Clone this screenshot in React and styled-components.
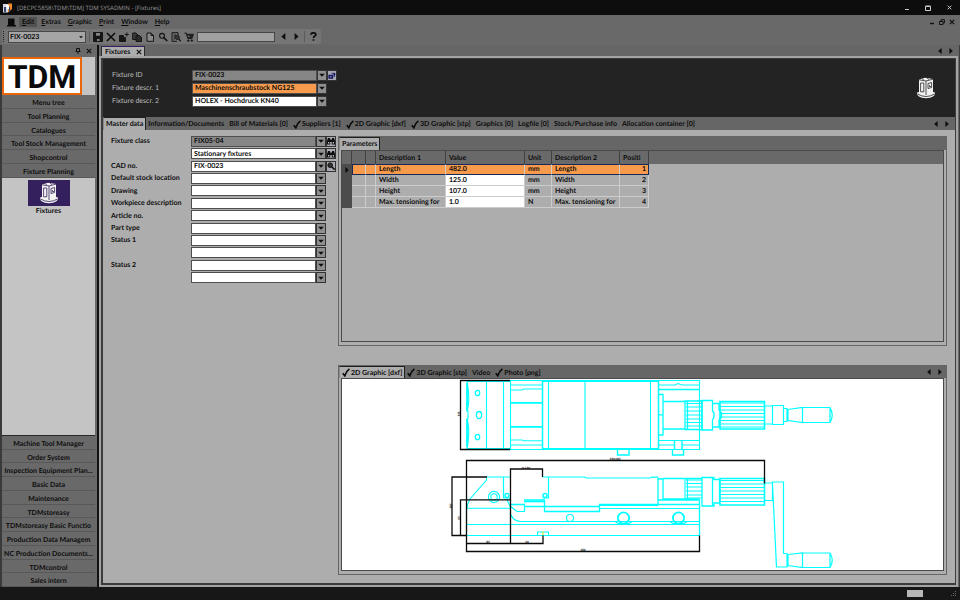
import { useState } from 'react';
import styled, { createGlobalStyle, css } from 'styled-components';

const GlobalStyle = createGlobalStyle`
  * {
    box-sizing: border-box;
  }

  body {
    margin: 0;
    background: #171717;
    color: #0c0c0c;
    font-family: Lato, 'Open Sans', sans-serif;
    font-size: 7px;
    font-weight: 700;
    line-height: 10px;
    text-rendering: geometricPrecision;
  }

  button,
  input,
  select {
    font: inherit;
    color: inherit;
    margin: 0;
    padding: 0;
    border: 0;
    border-radius: 0;
    background: none;
    text-rendering: inherit;
  }

  svg {
    display: block;
  }
`;

// Window frame
const Window = styled.div`
  min-height: 100vh;
  display: flex;
  flex-direction: column;
  background: #696969;
`;

const TitleBar = styled.header`
  display: flex;
  align-items: center;
  height: 15px;
  padding: 0 7px 0 3px;
  gap: 5px;
  background: #0d0d0d;
  color: #9a9a9a;
  font-family: 'Open Sans', 'Noto Sans', sans-serif;
  font-size: 6px;
  font-weight: 400;
`;

const WindowButtons = styled.div`
  display: flex;
  align-items: center;
  gap: ${(p) => (p.$tight ? '2px' : '13px')};
  margin-left: auto;
`;

const IconButton = styled.button`
  display: flex;
  align-items: center;
  justify-content: center;
  width: ${(p) => p.$size || 8}px;
  height: ${(p) => p.$size || 8}px;
  flex: none;
`;

const MenuBar = styled.nav`
  display: flex;
  align-items: center;
  height: 14px;
  padding: 0 4px 0 6px;
  gap: 1px;
`;

const MenuButton = styled.button`
  height: 10px;
  padding: 0 3px;
  background: ${(p) => (p.$active ? '#525252' : 'none')};

  &::first-letter {
    text-decoration: underline;
  }
`;

const ToolRow = styled.div`
  display: flex;
  height: 16px;
  padding: 0 2px 1px;
`;

const ToolBar = styled.div`
  display: flex;
  align-items: center;
  gap: 3px;
  padding: 0 3px 0 1px;
  border-radius: 2px;
  background: #757575;
`;

const Grip = styled.span`
  width: 2px;
  height: 11px;
  border-left: 1px dotted #1c1c1c;
`;

const ComboBox = styled.div`
  display: flex;
  align-items: center;
  width: 78px;
  height: 12px;
  padding-right: 2px;
  border: 1px solid #474747;
  background: #a5a5a5;
`;

const ComboSelect = styled.select`
  appearance: none;
  flex: 1;
  min-width: 0;
  height: 10px;
  padding-left: 1px;
  outline: none;
`;

const Separator = styled.span`
  width: 1px;
  height: 11px;
  background: #5c5c5c;
`;

const ToolSearch = styled.input`
  width: 78px;
  height: 10px;
  border: 1px solid #474747;
  background: #a0a0a0;
`;

// Sidebar
const Main = styled.div`
  flex: 1;
  display: flex;
  min-height: 0;
`;

const Sidebar = styled.aside`
  display: flex;
  flex-direction: column;
  width: 99px;
  flex: none;
  padding: 0 2px 0 0;
  border-left: 2px solid #3a3a3a;
  border-right: 2px solid #121212;
`;

const SidebarHead = styled.div`
  display: flex;
  justify-content: flex-end;
  align-items: center;
  gap: 3px;
  height: 12px;
  padding-right: 2px;
`;

const LogoStrip = styled.div`
  display: flex;
  height: 38px;
  background: #c4c4c4;
`;

const Logo = styled.div`
  display: flex;
  align-items: center;
  justify-content: center;
  width: 80px;
  padding-top: 2px;
  border: 2px solid #e8670c;
  background: #ffffff;
  color: #0b0b0b;
  font-family: Roboto, 'Liberation Sans', sans-serif;
  font-size: 32px;
  font-weight: 700;
  line-height: 32px;
`;

const NavGroup = styled.nav`
  display: flex;
  flex-direction: column;
  height: ${(p) => p.$height}px;
`;

const NavButton = styled.button`
  flex: 1;
  min-height: 0;
  padding-top: 3px;
  border-bottom: 1px solid #585858;
  background: #696969;
  white-space: nowrap;
`;

const NavContent = styled.div`
  flex: 1;
  display: flex;
  flex-direction: column;
  align-items: center;
  padding-top: 2px;
  border-bottom: 1px solid #2a2a2a;
  background: #c4c4c4;
`;

const ModuleButton = styled.button`
  display: flex;
  flex-direction: column;
  align-items: center;
`;

const ModuleTile = styled.span`
  display: flex;
  align-items: center;
  justify-content: center;
  width: 42px;
  height: 26px;
  background: #33205c;
`;

// Document area
const Workspace = styled.main`
  flex: 1;
  display: flex;
  flex-direction: column;
  min-width: 0;
  border-right: 1px solid #3a3a3a;
`;

const TabStrip = styled.div`
  display: flex;
  align-items: stretch;
  height: ${(p) => p.$height}px;
  padding-right: ${(p) => p.$end || 0}px;
  background: #666666;
`;

const TabButton = styled.button`
  display: flex;
  align-items: center;
  gap: 1px;
  padding: 0 2px;
  border-right: 1px solid transparent;
  white-space: nowrap;
  ${(p) =>
    p.$active
      ? css`
          border-top: 1px solid #1f1f1f;
          border-left: 1px solid #8a8a8a;
          border-right: 1px solid #1f1f1f;
          background: #adadad;
        `
      : css`
          border-top: 1px solid transparent;
        `}
`;

const DocTab = styled.div`
  display: flex;
  align-items: center;
  gap: 6px;
  margin: 1px 0 0 2px;
  padding: 0 2px 0 3px;
  border: 1px solid #2b2b2b;
  border-top-color: #33205c;
  border-bottom: 0;
  background: #adadad;
`;

const TabArrows = styled.div`
  display: flex;
  align-items: center;
  gap: 3px;
  margin-left: auto;
`;

const Document = styled.section`
  flex: 1;
  display: flex;
  flex-direction: column;
  margin-right: 1px;
  border: 2px solid #a3a3a3;
`;

const DocumentInner = styled.div`
  flex: 1;
  display: flex;
  flex-direction: column;
  border: 2px solid #3c3c3c;
  border-width: 1px 1px 2px 2px;
  background: #adadad;
`;

const RecordHead = styled.div`
  display: flex;
  justify-content: space-between;
  align-items: center;
  height: 58px;
  padding: 0 19px 0 9px;
  background: #232323;
`;

const HeadFields = styled.div`
  display: grid;
  grid-template-columns: 80px 146px;
  grid-auto-rows: 12px;
  row-gap: 1px;
`;

const FormFields = styled.div`
  display: grid;
  grid-template-columns: 80px 146px;
  grid-template-rows: repeat(12, 1fr);
  width: 235px;
  height: 149px;
  margin-top: 5px;
  padding-left: 8px;
`;

const FieldLabel = styled.label`
  color: ${(p) => (p.$light ? '#bcbcbc' : '#0c0c0c')};
  font-weight: ${(p) => (p.$light ? 400 : 700)};
  line-height: 12px;
  white-space: nowrap;
`;

const FieldControl = styled.div`
  display: flex;
  align-items: center;
`;

const tones = {
  white: '#ffffff',
  grey: '#868686',
  orange: '#f79a4b',
};

const TextBox = styled.input`
  width: 125px;
  height: 11px;
  padding: 0 0 0 2px;
  border: 1px solid #4e4e4e;
  background: ${(p) => tones[p.$tone]};
  outline: none;
`;

const FieldButton = styled.button`
  display: flex;
  align-items: center;
  justify-content: center;
  width: 10px;
  height: 11px;
  border: 1px solid #333333;
  background: ${(p) => (p.$plain ? '#a9a9b4' : '#8f8f8f')};
`;

const Body = styled.div`
  flex: 1;
  display: flex;
`;

const PanelColumn = styled.div`
  flex: 1;
  display: flex;
  flex-direction: column;
  gap: 19px;
  min-width: 0;
  padding: 6px 8px 8px 0;
`;

const Panel = styled.section`
  flex: 1 1 0;
  display: flex;
  flex-direction: column;
  border: 1px solid #666666;
`;

const PanelBody = styled.div`
  flex: 1;
  display: flex;
  flex-direction: column;
  margin: 0 2px 3px;
  border: 1px solid #4a4a4a;
  background: ${(p) => (p.$canvas ? '#ffffff' : '#adadad')};
`;

const TableBar = styled.div`
  background: linear-gradient(#696969 13px, transparent 13px);
`;

const ParameterTable = styled.table`
  width: 307px;
  table-layout: fixed;
  border-collapse: separate;
  border-spacing: 0;
`;

const HeadCell = styled.th`
  height: 13px;
  padding: 0 3px;
  border-right: 1px solid #404040;
  font-weight: 700;
  text-align: left;
`;

const Cell = styled.td`
  height: 11px;
  padding: 0 2px 0 3px;
  border-right: 1px solid #cccccc;
  border-bottom: 1px solid #cccccc;
  background: ${(p) => (p.$value ? '#ffffff' : '#adadad')};
  text-align: ${(p) => (p.$right ? 'right' : 'left')};
  line-height: 9px;
  white-space: nowrap;
  overflow: hidden;
`;

const RowHead = styled.td`
  padding: 0 2px;
  background: #4c4c4c;
`;

const Row = styled.tr`
  ${(p) =>
    p.$selected &&
    css`
      ${Cell} {
        border-top: 1px solid #14285a;
        border-bottom: 1px solid #14285a;
        background: #f79a4b;
      }
      ${Cell}:nth-child(2) {
        border-left: 1px solid #14285a;
      }
      ${Cell}:last-child {
        border-right: 1px solid #14285a;
      }
    `}
`;

const DrawingSvg = styled.svg`
  width: 100%;
  height: auto;
`;

const StatusBar = styled.footer`
  display: flex;
  justify-content: flex-end;
  align-items: center;
  gap: 28px;
  height: 13px;
  padding-right: 3px;
  background: #171717;
`;

const StatusLight = styled.span`
  width: 16px;
  height: 7px;
  background: #b8b8b8;
`;

const topModules = ['Menu tree', 'Tool Planning', 'Catalogues', 'Tool Stock Management', 'Shopcontrol', 'Fixture Planning'];

const bottomModules = [
  'Machine Tool Manager',
  'Order System',
  'Inspection Equipment Plan...',
  'Basic Data',
  'Maintenance',
  'TDMstoreasy',
  'TDMstoreasy Basic Functio',
  'Production Data Managem',
  'NC Production Documents...',
  'TDMcontrol',
  'Sales intern',
];

const recordTabs = [
  { label: 'Master data' },
  { label: 'Information/Documents' },
  { label: 'Bill of Materials [0]' },
  { label: 'Suppliers [1]', check: true },
  { label: '2D Graphic [dxf]', check: true },
  { label: '3D Graphic [stp]', check: true },
  { label: 'Graphics [0]' },
  { label: 'Logfile [0]' },
  { label: 'Stock/Purchase info' },
  { label: 'Allocation container [0]' },
];

const mediaTabs = [
  { label: '2D Graphic [dxf]', check: true },
  { label: '3D Graphic [stp]', check: true },
  { label: 'Video' },
  { label: 'Photo [png]', check: true },
];

const headFields = [
  { id: 'fixture-id', label: 'Fixture ID', value: 'FIX-0023', tone: 'grey', extra: 'assign' },
  { id: 'descr-1', label: 'Fixture descr. 1', value: 'Maschinenschraubstock NG125', tone: 'orange' },
  { id: 'descr-2', label: 'Fixture descr. 2', value: 'HOLEX - Hochdruck KN40' },
];

const formFields = [
  { id: 'class', label: 'Fixture class', value: 'FIX05-04', tone: 'grey', extra: 'find' },
  { id: 'class-name', name: 'Fixture class name', value: 'Stationary fixtures', extra: 'find' },
  { id: 'cad', label: 'CAD no.', value: 'FIX-0023', extra: 'zoom' },
  { id: 'stock', label: 'Default stock location' },
  { id: 'drawing', label: 'Drawing' },
  { id: 'workpiece', label: 'Workpiece description' },
  { id: 'article', label: 'Article no.' },
  { id: 'part-type', label: 'Part type' },
  { id: 'status-1', label: 'Status 1' },
  { id: 'status-1-text', name: 'Status 1 text' },
  { id: 'status-2', label: 'Status 2' },
  { id: 'status-2-text', name: 'Status 2 text' },
];

const parameters = [
  { name: 'Length', value: '482.0', unit: 'mm' },
  { name: 'Width', value: '125.0', unit: 'mm' },
  { name: 'Height', value: '107.0', unit: 'mm' },
  { name: 'Max. tensioning for', value: '1.0', unit: 'N' },
];

const Check = () => (
  <svg width="8" height="9" viewBox="0 0 8 9" fill="none" stroke="#0a0a0a" strokeWidth="1.6">
    <path d="M0.8 5.2 L2.8 7.8 C3.6 4.8 5 2.5 7.4 0.8" />
  </svg>
);

const Triangle = ({ dir = 'down', size = 6 }) => {
  const shapes = { down: 'M0.2 1.8 H5.8 L3 4.8Z', left: 'M4.6 0 V6 L1.2 3Z', right: 'M1.4 0 V6 L4.8 3Z' };
  return (
    <svg width={size} height={size} viewBox="0 0 6 6" fill="#0d0d0d">
      <path d={shapes[dir]} />
    </svg>
  );
};

const Cross = ({ color = '#101010', size = 6 }) => (
  <svg width={size} height={size} viewBox="0 0 6 6" stroke={color} strokeWidth="1.2">
    <path d="M0.8 0.8 L5.2 5.2 M5.2 0.8 L0.8 5.2" />
  </svg>
);

const FixtureIcon = ({ line, size = 20 }) => (
  <svg width={size} height={size * 1.1} viewBox="0 0 20 22">
    <path d="M1 15.5 Q0.5 20.8 10 21.3 Q19.5 20.8 19 15.5 L15 14.5 H5Z" fill="#f2f2f2" />
    <path d="M1.5 17 Q10 22 18.5 17" fill="none" stroke={line} strokeWidth="0.8" />
    <path d="M3 2.5 L9 0.8 L17 2 V15.5 L10 18.5 L3 16Z" fill="#f2f2f2" />
    <path d="M3.2 2.8 L10 4 L17 2.2 M10 4 V18 M4.6 6 H7.8 V14.8 H4.6Z M12 6.5 L15.6 5.5 V10.5 L12 11.5Z M13.4 8 V9.5 H15" fill="none" stroke={line} strokeWidth="0.8" />
    <path d="M6 1.6 L8 3 M11 1 L13 2.8" stroke={line} strokeWidth="0.6" />
  </svg>
);

const fieldIcons = {
  assign: (
    <svg width="10" height="9" viewBox="0 0 10 9" fill="#151560">
      <path d="M0.5 3.5 H6.5 V8.5 H0.5Z M8 1 L10 3.4 H8.7 V6 H7.3 V3.4 H6Z" />
      <circle cx="3.5" cy="6" r="1" fill="#a9a9b4" />
      <path d="M4.5 1.2 H8 V2.2 H4.5Z" />
    </svg>
  ),
  find: (
    <svg width="8" height="8" viewBox="0 0 8 8" fill="#0d0d0d">
      <path d="M1 1 H3 V2.5 H5 V1 H7 L8 4 V7.5 H4.8 V5 H3.2 V7.5 H0 V4Z" />
      <path d="M1 5 H2.3 V6.5 H1Z M5.7 5 H7 V6.5 H5.7Z" fill="#c4c4c4" />
    </svg>
  ),
  zoom: (
    <svg width="8" height="8" viewBox="0 0 8 8" fill="#333333" stroke="#0d0d0d">
      <circle cx="3.2" cy="3.2" r="2.3" strokeWidth="1" />
      <path d="M5 5 L7.6 7.6" strokeWidth="1.6" />
    </svg>
  ),
};

const toolIcons = {
  Save: <path d="M0.5 0.5 H9.5 V9.5 H0.5Z M2.5 0.5 V4 H7.5 V0.5 M3 9.5 V6.5 H7 V9.5" fill="#161616" stroke="#161616" />,
  Delete: <path d="M1 1 L9 9 M9 1 L1 9" stroke="#0d0d0d" strokeWidth="1.6" />,
  New: <path d="M0.5 3.5 H4.5 V5.5 H6.5 V9.5 H0.5Z M7.8 0.5 V4.5 M5.8 2.5 H9.8" fill="#161616" stroke="#161616" />,
  Copy: (
    <g stroke="#161616">
      <path d="M0.7 1 H4 L6 3 V7.5 H0.7Z" fill="#3a3a3a" />
      <path d="M4 3.5 H7.5 L9.5 5.3 V9.5 H4Z" fill="#2a2a2a" />
    </g>
  ),
  Sheet: <path d="M2 1 H6 L8.5 3.5 V9.3 H2Z M6 1 V3.5 H8.5" fill="#8a8a8a" stroke="#161616" />,
  Search: (
    <g fill="none" stroke="#111111">
      <circle cx="4" cy="3.8" r="2.4" strokeWidth="1.1" />
      <path d="M5.8 5.6 L9.3 9" strokeWidth="1.7" />
    </g>
  ),
  Preview: (
    <g fill="none" stroke="#161616">
      <path d="M1 0.7 H7 V3 M1 0.7 V9.3 H6 M2.5 3 H5 M2.5 5 H4 M2.5 7 H4" />
      <circle cx="6.3" cy="5.4" r="2" fill="#3d3d3d" />
      <path d="M7.8 7 L9.8 9.3" strokeWidth="1.5" />
    </g>
  ),
  Cart: (
    <g fill="#202020" stroke="#161616" strokeWidth="0.8">
      <path d="M0.5 1 H2.3 L3.8 6.5 H8.5 M2.6 2.2 H9.5 L8.4 5.5 H3.5Z" />
      <circle cx="4.3" cy="8.6" r="0.8" />
      <circle cx="7.8" cy="8.6" r="0.8" />
    </g>
  ),
};

const ToolIcon = ({ name }) => (
  <IconButton $size={10} aria-label={name}>
    <svg width="10" height="10" viewBox="0 0 10 10">
      {toolIcons[name]}
      {name === 'Save' && <path d="M3 1 H7 V3.4 H3Z M4 7 H6.5 V9 H4Z" fill="#858585" />}
    </svg>
  </IconButton>
);

function Field({ id, label, name, value = '', tone = 'white', extra, light }) {
  return (
    <>
      {label ? (
        <FieldLabel htmlFor={id} $light={light}>
          {label}
        </FieldLabel>
      ) : (
        <span />
      )}
      <FieldControl>
        <TextBox id={id} aria-label={name} defaultValue={value} $tone={tone} />
        <FieldButton aria-label={`${label || name} list`}>
          <Triangle />
        </FieldButton>
        {extra && (
          <FieldButton $plain aria-label={`${label || name} ${extra}`}>
            {fieldIcons[extra]}
          </FieldButton>
        )}
      </FieldControl>
    </>
  );
}

function Tabs({ tabs, height, end, arrows = true }) {
  const [active, setActive] = useState(0);

  return (
    <TabStrip role="tablist" $height={height} $end={end}>
      {tabs.map((tab, i) => (
        <TabButton key={tab.label} role="tab" aria-selected={i === active} $active={i === active} onClick={() => setActive(i)}>
          {tab.check && <Check />}
          {tab.label}
        </TabButton>
      ))}
      {arrows && <Arrows />}
    </TabStrip>
  );
}

function Arrows() {
  return (
    <TabArrows>
      <IconButton aria-label="Previous tab">
        <Triangle dir="left" size={6} />
      </IconButton>
      <IconButton aria-label="Next tab">
        <Triangle dir="right" size={6} />
      </IconButton>
    </TabArrows>
  );
}

// Horizontal knurling lines between two x positions
const knurl = (x1, x2, ys) => ys.map((y) => `M${x1} ${y} H${x2}`).join(' ');

function ViseDrawing() {
  return (
    <DrawingSvg viewBox="342 379 601 190" role="img" aria-label="Vise drawing">
      <g fill="none" stroke="#00ffff" strokeWidth="1.1">
        {/* top view: fixed jaw */}
        <path d="M510 381.5 H467 Q468 386 468.5 392 Q469.5 404 467 411 H468 V419 H467 Q469.5 427 468.5 437 Q468 445 467 448.5 H510" />
        <path d="M467 383 V411 M467 419 V447" strokeWidth="1.8" />
        <path d="M486.5 381 V449 M503.5 381 V449 M510.5 381 V449" />
        <ellipse cx="477.5" cy="393" rx="2.2" ry="2.7" strokeWidth="1.3" />
        <ellipse cx="479" cy="415" rx="2.6" ry="3.5" strokeWidth="1.3" />
        <ellipse cx="477.5" cy="437" rx="2.2" ry="2.7" strokeWidth="1.3" />
        <path d="M510 380.5 H542 M510 385 H542 M510 390 H522 L524 389 H542 M510 440 H522 L524 440.8 H542 M510 445 H542 M510 449.5 H542" />
        <path d="M510 402.8 H542 M510 426.8 H542" strokeWidth="1.8" />
        {/* top view: moving jaw */}
        <path d="M542.5 381 H658.5 M542.5 449 H658.5" strokeWidth="2" />
        <path d="M542.5 380 V450 M658.5 380 V450" strokeWidth="1.5" />
        <path d="M548.5 381 V449 M585 381 V449 M650.5 381 V449" />
        <path d="M617.5 450 V455 H629 V450 M672.5 450 V455 H683.5 V450 M674.5 441 V449.5 M682 441 V449.5" strokeWidth="1.4" />
        <path d="M658 380.5 H699.5 V449.5 H658 M658 385 H675 L678 383.5 L682 385 H699 M658 440.5 H699 M658 445 H675 M682 445 H699" />
        <path d="M658 389.5 H699.5" strokeWidth="1.6" />
        <path d="M658 394.5 H663 V435 H658 M658 414.8 H663" strokeWidth="1.3" />
        <path d="M663 401.5 H685 M663 429 H685" strokeWidth="1.3" />
        <path d="M685 401 H702 V429.5 H685Z M687.5 401 V429" strokeWidth="1.3" />
        <path d={knurl(686, 702, [403.5, 407, 411, 415, 419, 422.5, 426])} />
        <path d="M702 400.5 H712.5 V411 L714 413 V417 L712.5 420 V430 H702Z M712.5 403.5 H719 V410 L721.5 413 V417 L719 420 V427 H712.5" strokeWidth="1.3" />
        <path d="M720 401.5 H764.5 V429 H720Z" strokeWidth="1.6" />
        <path d={knurl(720, 764, [403, 406.5, 410, 413.5, 417, 420.5, 424, 427])} strokeWidth="1.1" />
        <path d="M765 406 H772.5 V424 H765 M772.5 405.5 H783.5 V424.5 H772.5Z M783.5 408.5 H787 V421.5 H783.5 M788 409.5 V420.5 L802.5 422.5 V407.5 L788 409.5 M802.5 407.5 H830 Q834.5 415 830 422.5 H802.5 M830 407.5 V422.5" strokeWidth="1.2" />
        {/* side view: base */}
        <path d="M510 477 H486.5 V480 L470 499 Q467 504 466.5 511 V535.5 H699.5 M467 508.3 H510 M466.5 524.5 H699.5" />
        <path d="M503.5 477 V498 H510 M542.5 477 H548.5 V498 H542.5 M548.5 477 H585 L586 478 H650 L652 477.2 H658" strokeWidth="1.2" />
        <circle cx="494" cy="497" r="5.6" />
        <circle cx="494" cy="497" r="3.2" />
        <circle cx="507" cy="495.5" r="2" strokeWidth="1.4" />
        <circle cx="545" cy="495.5" r="2" strokeWidth="1.4" />
        <path d="M507 500 L510 506 L517 511.5 H524.5 V503.5 M510 513 Q513 521.5 521 521.5 H699" strokeWidth="1.2" />
        <path d="M510 504.5 H524 M524 500 H545 M524 506.5 H599 M544.5 500 V511.5 H599.5 V504.5 H699" strokeWidth="1.3" />
        <path d="M524 501.5 H545" strokeWidth="1.6" />
        <path d="M599 505.5 H658 M599 508.5 H699" />
        <circle cx="570" cy="518" r="3.5" />
        <circle cx="623.5" cy="518" r="5.6" strokeWidth="1.8" />
        <circle cx="678.5" cy="518" r="5.6" strokeWidth="1.8" />
        <path d="M615 521.5 L618 523.5 H629 L632 521.5 M670 521.5 L673 523.5 H684 L687 521.5 M537.5 535 V532 H548.5 V535" />
        {/* side view: spindle and crank */}
        <path d="M658 477.5 V504 M658 479 H663 V499.5 M663 478.5 H702 M658 500 H699.5 V535.5 M663 499 H699" strokeWidth="1.3" />
        <path d="M685 478 V500 M687.5 478 V500" />
        <path d={knurl(686, 702, [480, 483.5, 487, 491, 495, 498])} strokeWidth="1.2" />
        <path d="M702 477.5 H714 V479.5 H719.5 V503 H714 V506 H702Z M712.5 478 V506" strokeWidth="1.3" />
        <path d="M720 478.5 H764.5 V505 H720Z" strokeWidth="1.6" />
        <path d={knurl(720, 764, [480.5, 484, 487.5, 491, 494.5, 498, 501.5])} strokeWidth="1.1" />
        <path d="M765 483 H772.5 V500.5 H765 M772.5 500 V482 H783.5 V553.5 H787 V567 H776.5 L772.5 484 M788 554.5 V565.5 L802.5 567.5 V553 L788 554.5 M802.5 553 H830 Q834.5 560 830 567.5 H802.5 M830 553 V567.5" strokeWidth="1.2" />
      </g>
      <path d="M543 531.5 V535" stroke="#d8e800" />
      <g fill="none" stroke="#0a0a0a" strokeWidth="1.3">
        <path d="M510 380.5 H460.5 V449.5 H510" />
        <path d="M764.5 483.5 V460.5 H466.5 V551.5 H699.5 V535.5" />
        <path d="M487 477 H452 V535.5 H467 M510 499.8 H460.5 V535.5" />
        <path d="M542.5 477 V469 H510.5 V543.5 M466.5 543.5 H510.5 H543 V535.5" />
      </g>
      <g fill="#0a0a0a" fontSize="3" fontWeight="900" textAnchor="middle">
        <text x="526" y="468.5">0-130</text>
        <text x="615" y="460">430.684</text>
        <text x="488" y="543">82</text>
        <text x="527" y="543">60</text>
        <text x="583" y="551">430</text>
        <text transform="translate(452 506) rotate(-90)">107</text>
        <text transform="translate(460 518) rotate(-90)">65</text>
        <text transform="translate(460 414) rotate(-90)">125</text>
      </g>
    </DrawingSvg>
  );
}

function App() {
  return (
    <>
      <GlobalStyle />
      <Window>
        <TitleBar>
          <svg width="9" height="10" viewBox="0 0 9 10">
            <path d="M0 1 H5 V9.5 H0Z" fill="#d9d9e6" />
            <path d="M5 0.5 H9 V6 L5 9.5Z" fill="#ee8a2e" />
            <path d="M1 4 H3 V9 H1Z M6 4 H7 V9 H6Z" fill="#34456f" />
            <path d="M3 2 H6 V6 H4Z" fill="#ffffff" />
          </svg>
          <span>[DECPC5858\TDM\TDM] TDM SYSADMIN - [Fixtures]</span>
          <WindowButtons>
            <IconButton aria-label="Minimize">
              <svg width="6" height="6" stroke="#cccccc">
                <path d="M1 4.5 H5" />
              </svg>
            </IconButton>
            <IconButton aria-label="Maximize">
              <svg width="6" height="6" fill="none" stroke="#cccccc">
                <path d="M0.5 1.5 H5.5 V5.5 H0.5Z M0.5 1 H5.5" />
              </svg>
            </IconButton>
            <IconButton aria-label="Close">
              <Cross color="#cccccc" size={5} />
            </IconButton>
          </WindowButtons>
        </TitleBar>

        <MenuBar>
          <svg width="12" height="9" viewBox="0 0 12 9" fill="#0a0a0a">
            <path d="M2 0.5 H8.5 V7 H10 V8.5 H1 V7 H2Z" />
          </svg>
          <MenuButton $active>Edit</MenuButton>
          {['Extras', 'Graphic', 'Print', 'Window', 'Help'].map((item) => (
            <MenuButton key={item}>{item}</MenuButton>
          ))}
          <WindowButtons $tight>
            <IconButton aria-label="Minimize document">
              <svg width="6" height="6" stroke="#101010">
                <path d="M1 4.5 H5" strokeWidth="1.4" />
              </svg>
            </IconButton>
            <IconButton aria-label="Restore document">
              <svg width="6" height="6" fill="none" stroke="#101010">
                <path d="M2 2 V0.7 H5.4 V4 H4 M0.5 2.5 H4 V5.5 H0.5Z" />
              </svg>
            </IconButton>
            <IconButton aria-label="Close document">
              <Cross />
            </IconButton>
          </WindowButtons>
        </MenuBar>

        <ToolRow>
          <ToolBar>
            <Grip />
            <ComboBox>
              <ComboSelect aria-label="Record" defaultValue="FIX-0023">
                <option>FIX-0023</option>
              </ComboSelect>
              <Triangle size={4} />
            </ComboBox>
            <Separator />
            {Object.keys(toolIcons).map((name) => (
              <ToolIcon key={name} name={name} />
            ))}
            <ToolSearch aria-label="Quick search" />
            <IconButton $size={10} aria-label="Back">
              <Triangle dir="left" size={7} />
            </IconButton>
            <IconButton $size={10} aria-label="Forward">
              <Triangle dir="right" size={7} />
            </IconButton>
            <Separator />
            <IconButton $size={10} aria-label="Help">
              <svg width="7" height="9" viewBox="0 0 7 9" fill="none" stroke="#0d0d0d" strokeWidth="1.7">
                <path d="M1 2.8 C1 0.2 5.9 0.2 5.9 2.6 C5.9 4.2 3.5 4 3.5 6 M3.5 7.2 V8.8" />
              </svg>
            </IconButton>
          </ToolBar>
        </ToolRow>

        <Main>
          <Sidebar>
            <SidebarHead>
              <IconButton aria-label="Pin sidebar">
                <svg width="6" height="6" viewBox="0 0 6 6" fill="none" stroke="#101010">
                  <path d="M1.5 3.5 V0.5 H4.5 V3.5 M0.5 3.5 H5.5 M3 3.5 V6" />
                </svg>
              </IconButton>
              <IconButton aria-label="Close sidebar">
                <Cross />
              </IconButton>
            </SidebarHead>
            <LogoStrip>
              <Logo>TDM</Logo>
            </LogoStrip>
            <NavGroup $height={83}>
              {topModules.map((item) => (
                <NavButton key={item}>{item}</NavButton>
              ))}
            </NavGroup>
            <NavContent>
              <ModuleButton>
                <ModuleTile>
                  <FixtureIcon line="#33205c" />
                </ModuleTile>
                Fixtures
              </ModuleButton>
            </NavContent>
            <NavGroup $height={151}>
              {bottomModules.map((item) => (
                <NavButton key={item}>{item}</NavButton>
              ))}
            </NavGroup>
          </Sidebar>

          <Workspace>
            <TabStrip $height={11} $end={4}>
              <DocTab>
                Fixtures
                <IconButton $size={6} aria-label="Close Fixtures">
                  <Cross size={6} />
                </IconButton>
              </DocTab>
              <Arrows />
            </TabStrip>
            <Document>
              <DocumentInner>
                <RecordHead>
                  <HeadFields>
                    {headFields.map((field) => (
                      <Field key={field.id} {...field} light />
                    ))}
                  </HeadFields>
                  <FixtureIcon line="#232323" />
                </RecordHead>
                <Tabs tabs={recordTabs} height={13} end={4} />
                <Body>
                  <FormFields>
                    {formFields.map((field) => (
                      <Field key={field.id} {...field} />
                    ))}
                  </FormFields>
                  <PanelColumn>
                    <Panel>
                      <Tabs tabs={[{ label: 'Parameters' }]} height={13} arrows={false} />
                      <PanelBody>
                        <TableBar>
                          <ParameterTable>
                            <colgroup>
                              {[10, 14, 10, 70, 79, 27, 68, 29].map((width, i) => (
                                <col key={i} width={width} />
                              ))}
                            </colgroup>
                            <thead>
                              <tr>
                                {['', '', '', 'Description 1', 'Value', 'Unit', 'Description 2', 'Positi'].map((head, i) => (
                                  <HeadCell key={i}>{head}</HeadCell>
                                ))}
                              </tr>
                            </thead>
                            <tbody>
                              {parameters.map((param, i) => (
                                <Row key={param.name} $selected={i === 0}>
                                  <RowHead>{i === 0 && <Triangle dir="right" size={6} />}</RowHead>
                                  <Cell />
                                  <Cell />
                                  <Cell>{param.name}</Cell>
                                  <Cell $value>{param.value}</Cell>
                                  <Cell>{param.unit}</Cell>
                                  <Cell>{param.name}</Cell>
                                  <Cell $right>{i + 1}</Cell>
                                </Row>
                              ))}
                            </tbody>
                          </ParameterTable>
                        </TableBar>
                      </PanelBody>
                    </Panel>
                    <Panel>
                      <Tabs tabs={mediaTabs} height={12} end={2} />
                      <PanelBody $canvas>
                        <ViseDrawing />
                      </PanelBody>
                    </Panel>
                  </PanelColumn>
                </Body>
              </DocumentInner>
            </Document>
          </Workspace>
        </Main>

        <StatusBar>
          <StatusLight />
          <svg width="6" height="6" fill="#6b6b6b">
            <path d="M4 0 H5 V1 H4Z M2 2 H3 V3 H2Z M4 2 H5 V3 H4Z M0 4 H1 V5 H0Z M2 4 H3 V5 H2Z M4 4 H5 V5 H4Z" />
          </svg>
        </StatusBar>
      </Window>
    </>
  );
}

export default App;
